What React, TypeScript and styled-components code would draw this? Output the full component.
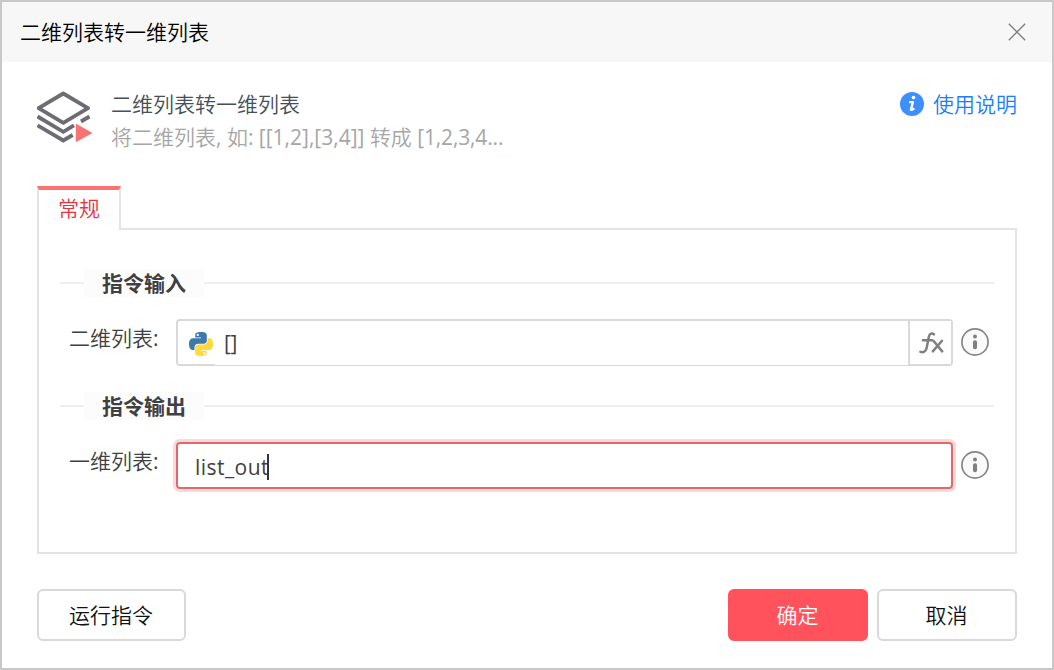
import React from "react";
import styled, { createGlobalStyle, css } from "styled-components";

const GlobalStyle = createGlobalStyle`
  *, *::before, *::after { box-sizing: border-box; }
  body { margin: 0; background: #fff; }
  button { font: inherit; padding: 0; cursor: pointer; }
`;

const Dialog = styled.div`
  width: 1054px;
  height: 670px;
  border: 2px solid #c8c8c8;
  background: #fff;
  font-family: "Open Sans", "Noto Sans CJK SC", sans-serif;
  font-size: 21px;
  font-weight: 350;
  line-height: 30px;
  color: #404040;
  white-space: nowrap;
  overflow: hidden;
`;

const TitleBar = styled.header`
  display: flex;
  align-items: center;
  justify-content: space-between;
  height: 60px;
  padding: 0 25px 0 18px;
  background: #f7f7f7;
  color: #000;
`;

const CloseButton = styled.button`
  display: flex;
  border: 0;
  background: none;
`;

const Body = styled.main`
  padding: 0 35px;
`;

const Summary = styled.section`
  display: flex;
  align-items: flex-start;
  height: 124px;
  padding-top: 26px;
`;

const SummaryIcon = styled.div`
  display: flex;
  width: 74px;
  padding-top: 1px;
`;

const SummaryText = styled.div`
  flex: 1;
`;

const Name = styled.div`
  line-height: 32px;
  color: #465058;
`;

const Description = styled.div`
  line-height: 34px;
  color: #a6a6a6;
`;

const Latin = styled.span<{ $spacing?: number }>`
  font-weight: 400;
  letter-spacing: ${(p) => p.$spacing ?? 0}px;
`;

const HelpLink = styled.a`
  display: flex;
  align-items: center;
  gap: 9px;
  height: 32px;
  color: #1a7dff;
`;

const Tab = styled.div`
  width: 84px;
  height: 44px;
  margin-bottom: -2px;
  padding-left: 19px;
  border: 2px solid #e4e4e4;
  border-top: 4px solid #fb7373;
  border-bottom: 0;
  background: #fff;
  position: relative;
  line-height: 37px;
  color: #e8343f;
`;

const Panel = styled.div`
  height: 326px;
  padding: 39px 21px 0;
  border: 2px solid #e4e4e4;
`;

const Legend = styled.div`
  display: flex;
  align-items: center;
  height: 28px;
  font-weight: 700;

  &::before, &::after {
    content: "";
    height: 2px;
    background: #efefef;
  }
  &::before { width: 24px; }
  &::after { flex: 1; }
`;

const LegendText = styled.span`
  width: 120px;
  height: 28px;
  line-height: 28px;
  text-align: center;
  background: #fcfcfc;
`;

const Row = styled.div`
  display: flex;
  align-items: center;
  height: 47px;
  margin: 22px 5px 26px 9px;
`;

const Label = styled.label`
  width: 107px;
  height: 47px;
  line-height: 39px;
`;

const Field = styled.div<{ $focused?: boolean }>`
  display: flex;
  align-items: center;
  width: 777px;
  height: 47px;
  margin-right: 8px;
  border: 2px solid #d9d9d9;
  border-bottom-width: 1px;
  border-radius: 4px;
  color: #404040;
  ${(p) =>
    p.$focused &&
    css`
      border: 2px solid #de6a70;
      box-shadow: 0 0 0 3px #ffd7d6;
      padding: 2px 0 0 17px;
    `}
`;

const TypeSlot = styled.div`
  display: flex;
  align-items: center;
  width: 37px;
  height: 44px;
  padding: 2px 0 0 11px;
  border-bottom: 1px solid #d9d9d9;
`;

const Value = styled.span`
  flex: 1;
  padding-left: 9px;
  font-weight: 400;
  letter-spacing: -0.3px;
`;

const Caret = styled.span`
  width: 2px;
  height: 26px;
  margin-left: -2px;
  background: #333;
`;

const FxButton = styled.button`
  display: flex;
  align-items: center;
  justify-content: center;
  width: 43px;
  height: 44px;
  border: 0;
  border-left: 2px solid #d9d9d9;
  border-bottom: 1px solid #d9d9d9;
  background: #fff;
`;

const InfoBadge = styled.span`
  display: flex;
  height: 30px;
`;

const Footer = styled.footer`
  display: flex;
  gap: 9px;
  margin-top: 35px;
`;

const Button = styled.button<{ $primary?: boolean; $width?: number }>`
  width: ${(p) => p.$width ?? 140}px;
  height: 52px;
  padding-right: 1px;
  border: 2px solid ${(p) => (p.$primary ? "#ff525c" : "#d9d9d9")};
  border-radius: 6px;
  background: ${(p) => (p.$primary ? "#ff525c" : "#fff")};
  color: ${(p) => (p.$primary ? "#fff" : "#111")};
`;

const Spacer = styled.div`
  flex: 1;
`;

const LayersIcon = () => (
  <svg width="60" height="58" viewBox="0 0 60 58" fill="none" stroke="#6d6c74" strokeWidth="3.8">
    <path d="M26.3 4.5 51 19.2 26.3 33.9 1.6 19.2Z" strokeLinejoin="round" />
    <path d="M0.5 27.5 26.3 42.8 37 36.4M44 32.500 52.5 27.5" />
    <path d="M0.5 36.300 26.3 51.500 35.7 46" />
    <path d="M38.8 34.5 55.5 43.9 38.8 53.2Z" fill="#fa7373" stroke="none" />
  </svg>
);

const PythonIcon = () => (
  <svg width="24" height="24" viewBox="0 0 111 111">
    <path
      fill="#3f78ab"
      d="M54.9 0C50.300 0 46 .4 42.100 1.100 30.700 3.100 28.700 7.300 28.700 15v10.200h26.800v3.400H18.600c-7.800 0-14.600 4.700-16.700 13.600-2.500 10.200-2.600 16.600 0 27.300 1.900 7.900 6.500 13.600 14.300 13.600h9.200V70.900c0-8.900 7.700-16.700 16.800-16.700H69c7.500 0 13.400-6.100 13.400-13.600V15c0-7.300-6.100-12.700-13.400-13.900C64.400.3 59.500 0 54.900 0ZM40.400 8.200c2.800 0 5 2.300 5 5.100 0 2.800-2.300 5.100-5 5.100-2.800 0-5-2.300-5-5.100 0-2.800 2.200-5.100 5-5.100Z"
    />
    <path
      fill="#ffda3e"
      d="M85.600 28.700v11.900c0 9.200-7.800 17-16.700 17H42.100c-7.300 0-13.400 6.300-13.400 13.600v25.500c0 7.300 6.300 11.500 13.400 13.600 8.500 2.500 16.600 3 26.800 0 6.700-2 13.400-5.900 13.400-13.600V86.500H55.600v-3.400h40.200c7.800 0 10.700-5.400 13.400-13.600 2.800-8.400 2.700-16.500 0-27.300-1.900-7.800-5.600-13.600-13.400-13.600ZM70.600 93.300c2.800 0 5 2.300 5 5.100 0 2.800-2.300 5.100-5 5.100-2.800 0-5-2.300-5-5.100 0-2.800 2.300-5.100 5-5.100Z"
    />
  </svg>
);

const FxIcon = () => (
  <svg width="26" height="24" viewBox="0 0 26 24" fill="none" stroke="#808080" strokeWidth="2.500" strokeLinecap="round">
    <path d="M16 3.400C14.300 1.700 11.600 2.300 10.900 5.500L8.500 17.500C7.800 20.700 5.200 21.700 2.400 20.900M4.900 9.300H14" />
    <path d="M15.400 9.700 24.200 20.400M24 9.700 14.800 20.400" />
  </svg>
);

const InfoIcon = () => (
  <InfoBadge>
    <svg width="28" height="28" viewBox="0 0 28 28">
      <circle cx="14" cy="14" r="13.100" fill="#fafafa" stroke="#868686" strokeWidth="1.700" />
      <circle cx="14" cy="8.600" r="2" fill="#808080" />
      <rect x="12" y="12.200" width="4" height="9" rx="1.800" fill="#808080" />
    </svg>
  </InfoBadge>
);

const HelpIcon = () => (
  <svg width="24" height="24" viewBox="0 0 24 24">
    <circle cx="12" cy="12" r="12" fill="#3d8fff" />
    <circle cx="13.500" cy="5.600" r="1.800" fill="#fff" />
    <path d="M9.200 10.100h3.700l-2 7.600c1 .4 2.200-.2 3.400-1.300" fill="none" stroke="#fff" strokeWidth="2.300" strokeLinejoin="round" />
  </svg>
);

export default function App() {
  return (
    <>
      <GlobalStyle />
      <Dialog role="dialog">
        <TitleBar>
          <span>二维列表转一维列表</span>
          <CloseButton aria-label="关闭">
            <svg width="20" height="20" viewBox="0 0 20 20" stroke="#808080" strokeWidth="1.400">
              <path d="M1.800 1.800 18.200 18.200M18.200 1.800 1.800 18.200" />
            </svg>
          </CloseButton>
        </TitleBar>
        <Body>
          <Summary>
            <SummaryIcon>
              <LayersIcon />
            </SummaryIcon>
            <SummaryText>
              <Name>二维列表转一维列表</Name>
              <Description>
                将二维列表<Latin>, </Latin>如<Latin>: [[1,2],[3,4]] </Latin>转成
                <Latin $spacing={-0.15}> [1,2,3,4...</Latin>
              </Description>
            </SummaryText>
            <HelpLink>
              <HelpIcon />
              使用说明
            </HelpLink>
          </Summary>
          <Tab>常规</Tab>
          <Panel>
            <Legend>
              <LegendText>指令输入</LegendText>
            </Legend>
            <Row>
              <Label>
                二维列表<Latin>:</Latin>
              </Label>
              <Field>
                <TypeSlot>
                  <PythonIcon />
                </TypeSlot>
                <Value>[]</Value>
                <FxButton aria-label="fx">
                  <FxIcon />
                </FxButton>
              </Field>
              <InfoIcon />
            </Row>
            <Legend>
              <LegendText>指令输出</LegendText>
            </Legend>
            <Row>
              <Label>
                一维列表<Latin>:</Latin>
              </Label>
              <Field $focused>
                <Latin $spacing={0.45}>list_out</Latin>
                <Caret />
              </Field>
              <InfoIcon />
            </Row>
          </Panel>
          <Footer>
            <Button $width={149}>运行指令</Button>
            <Spacer />
            <Button $primary>确定</Button>
            <Button>取消</Button>
          </Footer>
        </Body>
      </Dialog>
    </>
  );
}
